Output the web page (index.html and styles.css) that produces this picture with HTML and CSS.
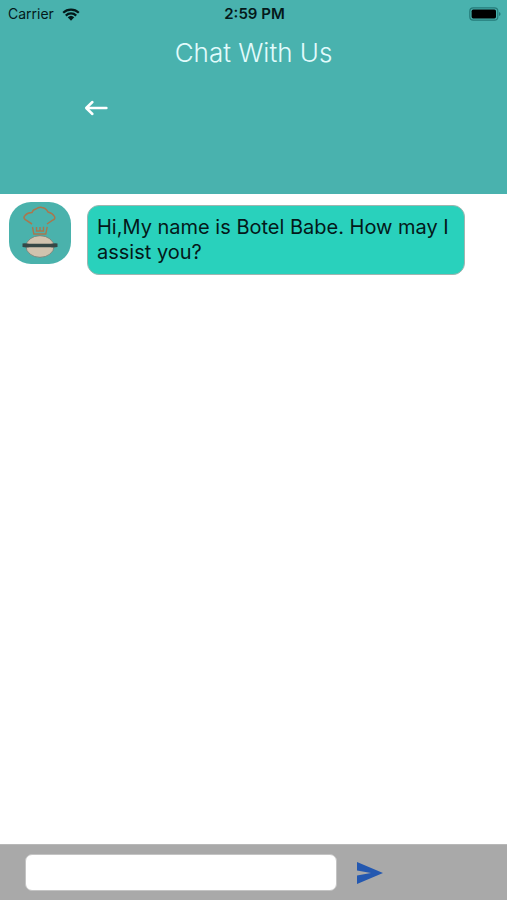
FILE: index.html
```html
<!DOCTYPE html>
<html lang="en">
<head>
<meta charset="utf-8">
<meta name="viewport" content="width=device-width, initial-scale=1">
<title>Chat With Us</title>
<link rel="stylesheet" href="styles.css">
</head>
<body>
<header class="header">
  <div class="status">
    <div class="carrier">
      <span>Carrier</span>
      <svg class="wifi" viewBox="0 0 18 13" aria-hidden="true">
        <path d="M1.2 4.8a11.2 11.2 0 0 1 15.6 0M3.8 7.6a7.4 7.4 0 0 1 10.4 0" fill="none" stroke="#04191a" stroke-width="2.2"/>
        <path d="M5.7 9.3a4.8 4.8 0 0 1 6.6 0L9 12.7z" fill="#04191a"/>
      </svg>
    </div>
    <time class="clock">2:59 PM</time>
    <svg class="battery" viewBox="0 0 32 14" aria-hidden="true">
      <rect x="0.8" y="0.8" width="28" height="12.4" rx="3.4" fill="none" stroke="#257b79" stroke-width="1.2"/>
      <rect x="2.6" y="2.6" width="24.4" height="8.8" rx="1.6" fill="#000"/>
      <path d="M30 5v4q1.6-.6 1.6-2T30 5z" fill="#257b79"/>
    </svg>
  </div>
  <h1 class="title">Chat With Us</h1>
  <button class="back" type="button" aria-label="Back">
    <svg class="back-icon" viewBox="0 0 24 16" aria-hidden="true">
      <path d="M22.4 8H2.5M8.4 2L2.2 8l6.2 6" fill="none" stroke="#fff" stroke-width="2.5" stroke-linecap="round" stroke-linejoin="round"/>
    </svg>
  </button>
</header>
<main class="messages">
  <div class="message">
    <svg class="avatar" viewBox="0 0 62 62" role="img" aria-label="Botel Babe">
      <rect width="62" height="62" rx="22" fill="#4ab2ac"/>
      <path d="M23 22L16 17.500Q14 15.500 16 13.500Q18.500 10.500 23 10.500Q24 7.500 27 7Q30 4.500 33 5.500Q37 6 39 10Q43.500 11 45.500 14.500Q46.500 17 44 18L38 22" fill="none" stroke="#a9774e" stroke-width="1.500"/>
      <path d="M23.500 25l1.300 7h12l1.400-7.200M27.500 25v4h7v-4.200M31 25v3.500" fill="none" stroke="#a9774e" stroke-width="1.400"/>
      <ellipse cx="31" cy="44.500" rx="14" ry="10.800" fill="#d1c3ae" stroke="#6f7d75" stroke-width=".8"/>
      <path d="M13.500 41.500q3-.5 7 .3h21q4-.8 7-.3v3.500q-3 .8-7 .3h-21q-4 .5-7-.3z" fill="#364846"/>
    </svg>
    <p class="bubble">Hi,My name is Botel Babe. How may I assist you?</p>
  </div>
</main>
<form class="composer">
  <input class="entry" type="text" aria-label="Message">
  <button class="send" type="button" aria-label="Send">
    <svg class="send-icon" viewBox="0 0 26 22" aria-hidden="true">
      <path d="M0 0L26 11L0 22V13.400L14 11L0 8.600z" fill="#2458b0"/>
    </svg>
  </button>
</form>
</body>
</html>
```
FILE: styles.css
```css
* {
  box-sizing: border-box;
}

body {
  margin: 0;
  min-height: 100vh;
  display: flex;
  flex-direction: column;
  background: #fff;
  color: #04191a;
  font-family: Inter, "Liberation Sans", sans-serif;
}

button {
  padding: 0;
  border: 0;
  background: none;
  cursor: pointer;
}

svg {
  display: block;
}

.header {
  display: flex;
  flex-direction: column;
  padding-bottom: 78px;
  background: #49b2ae;
}

.status {
  display: grid;
  grid-template-columns: 1fr auto 1fr;
  align-items: center;
  height: 28px;
  padding: 0 6px 0 8px;
  font-size: 14px;
  line-height: 20px;
}

.carrier {
  display: flex;
  align-items: center;
  gap: 8px;
}

.wifi {
  width: 18px;
  height: 13px;
}

.clock {
  font-size: 15px;
  font-weight: 600;
}

.battery {
  width: 32px;
  height: 14px;
  justify-self: end;
}

.title {
  margin: 8px 0 0;
  color: #e2fbfc;
  font-size: 26px;
  font-weight: 300;
  line-height: 34px;
  text-align: center;
}

.back {
  width: 24px;
  margin: 30px 0 0 84px;
}

.back-icon {
  width: 24px;
  height: 16px;
}

.messages {
  flex: 1;
  padding: 8px 42px 8px 9px;
}

.message {
  display: flex;
  align-items: flex-start;
  gap: 16px;
}

.avatar {
  flex: none;
  width: 62px;
  height: 62px;
}

.bubble {
  flex: 1;
  margin: 3px 0 0;
  padding: 9px;
  border: 1px solid #9fb5b0;
  border-radius: 12px;
  background: #29d1bc;
  font-size: 20px;
  line-height: 25px;
}

.composer {
  display: flex;
  align-items: center;
  gap: 20px;
  padding: 9px 124px 9px 25px;
  border-top: 1px solid #b8b8b8;
  background: #a9a9a9;
}

.entry {
  flex: 1;
  min-width: 0;
  height: 37px;
  padding: 0 10px;
  border: 1px solid #c4c4c4;
  border-radius: 7px;
  background: #fff;
  font: inherit;
  font-size: 18px;
}

.send-icon {
  width: 26px;
  height: 22px;
}
```
